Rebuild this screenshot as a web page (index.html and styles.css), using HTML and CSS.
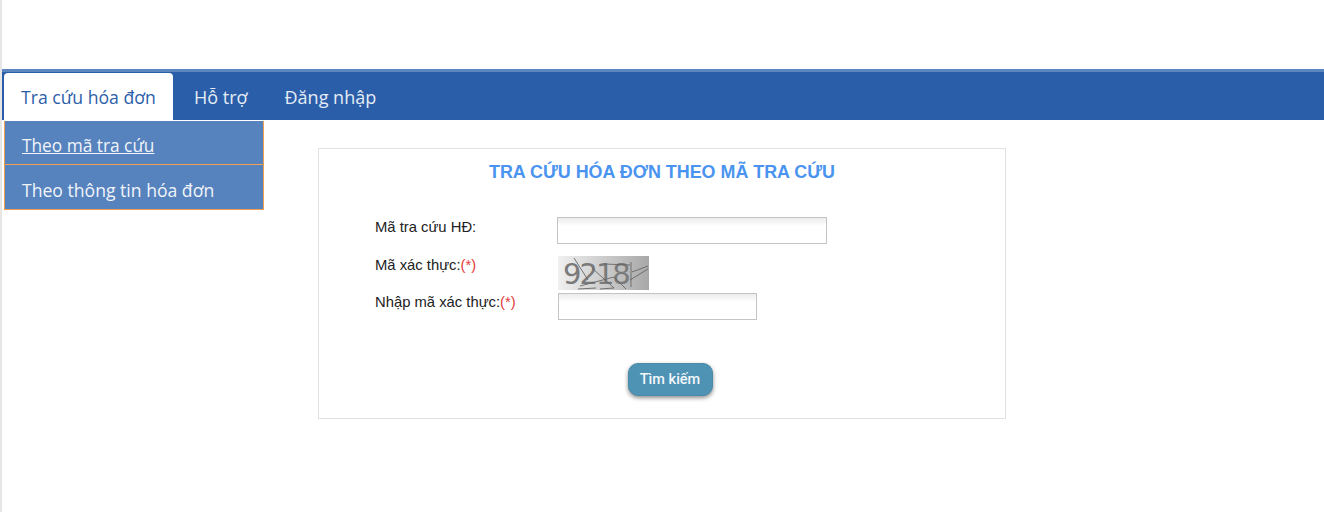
FILE: index.html
```html
<!DOCTYPE html>
<html lang="vi">
<head>
<meta charset="utf-8">
<title>Tra cứu hóa đơn</title>
<link rel="stylesheet" href="styles.css">
</head>
<body>
<div class="page">
  <nav class="nav">
    <a class="tab active">Tra cứu hóa đơn</a>
    <a class="tab tab-help">Hỗ trợ</a>
    <a class="tab tab-login">Đăng nhập</a>
    <div class="dropdown">
      <a class="drop-item current">Theo mã tra cứu</a>
      <a class="drop-item">Theo thông tin hóa đơn</a>
    </div>
  </nav>
  <main class="content">
    <section class="card">
      <h1 class="title">TRA CỨU HÓA ĐƠN THEO MÃ TRA CỨU</h1>
      <div class="row row-code">
        <label class="label">Mã tra cứu HĐ:</label>
        <input class="input input-long" type="text">
      </div>
      <div class="row row-captcha">
        <label class="label">Mã xác thực:<span class="req">(*)</span></label>
        <div class="captcha">
          <span class="captcha-text">9218</span>
          <svg class="captcha-noise" width="91" height="34" viewBox="0 0 91 34">
            <g fill="none" stroke="#666" stroke-width="0.9">
              <path d="M16 2 L30 24"/>
              <path d="M46 8 L72 9"/>
              <path d="M22 30 L56 21 L68 33"/>
              <path d="M72 24 L90 13"/>
              <path d="M74 16 L90 10"/>
              <path d="M73 6 L73 31"/>
              <path d="M20 33 L38 32"/>
              <path d="M42 33 L56 32"/>
              <path d="M34 12 L56 32"/>
            </g>
          </svg>
        </div>
      </div>
      <div class="row row-enter">
        <label class="label">Nhập mã xác thực:<span class="req">(*)</span></label>
        <input class="input input-short" type="text">
      </div>
      <div class="actions">
        <button class="btn" type="button">Tìm kiếm</button>
      </div>
    </section>
  </main>
</div>
</body>
</html>
```

FILE: styles.css
```css
* { box-sizing: border-box; }
html, body { margin: 0; padding: 0; background: #fff; height: 100%; overflow: hidden; }
body { font-family: "Liberation Sans", Arial, sans-serif; color: #222; }
.page {
  height: 512px;
  padding-top: 69px;
  border-left: 2px solid #e6e6e6;
}
.nav {
  position: relative;
  display: flex;
  height: 51px;
  padding-left: 2px;
  background: #2b5ea8;
  border-top: 3px solid #5b86c0;
  font-family: "Open Sans", sans-serif;
  font-size: 18px;
}
.tab {
  display: flex;
  align-items: center;
  height: 47px;
  margin-top: 1px;
  color: #e4ecf7;
  white-space: nowrap;
}
.tab.active {
  width: 169px;
  background: #fff;
  color: #2b5ea8;
  border-radius: 4px 4px 0 0;
  padding-left: 17px;
  font-size: 17.6px;
}
.tab-help { margin-left: 21px; }
.tab-login { margin-left: 37px; }
.dropdown {
  position: absolute;
  top: 49px;
  left: 2px;
  width: 260px;
  border: 1px solid #f0a050;
  border-top: 0;
  background: #5682bd;
  z-index: 2;
}
.drop-item {
  display: flex;
  align-items: center;
  height: 43px;
  padding: 6px 0 0 17px;
  color: #f1f5fb;
  font-size: 17.3px;
}
.drop-item + .drop-item {
  height: 45px;
  padding-top: 5px;
  border-top: 1px solid #f0a050;
  font-size: 17.6px;
}
.drop-item.current { text-decoration: underline; }
.content { padding: 28px 0 0 316px; }
.card {
  width: 688px;
  height: 271px;
  border: 1px solid #e2e2e2;
  position: relative;
}
.title {
  margin: 0;
  padding-top: 13px;
  text-align: center;
  font-size: 17.9px;
  line-height: 21px;
  font-weight: bold;
  color: #4a94f0;
}
.row { display: flex; align-items: flex-start; padding-left: 56px; }
.label { width: 182px; font-size: 14.8px; line-height: 16px; color: #222; }
.req { color: #e23b3b; }
.input {
  height: 27px;
  padding: 0 6px;
  border: 1px solid #c4c4c4;
  background: linear-gradient(#ececec, #fff 8px);
  font: 14px "Liberation Sans", sans-serif;
}
.input-long { width: 270px; }
.input-short { width: 199px; margin-left: 1px; }
.row-code { margin-top: 34px; }
.row-code .label { padding-top: 2px; }
.row-captcha { margin-top: 12px; }
.row-captcha .label { padding-top: 1px; }
.row-enter { margin-top: 3px; }
.row-enter .label { padding-top: 1px; }
.captcha {
  position: relative;
  width: 91px;
  height: 34px;
  margin-left: 1px;
  padding: 3px 0 0 5px;
  background: linear-gradient(90deg, #f0f0f0, #a8a8a8);
}
.captcha-text {
  display: block;
  font: 29px/31px "DejaVu Sans", sans-serif;
  color: #7a7a7a;
  letter-spacing: -2px;
}
.captcha-noise { position: absolute; top: 0; left: 0; }
.actions { display: flex; justify-content: center; margin-top: 43px; }
.btn {
  width: 85px;
  height: 33px;
  padding: 0;
  border: 1px solid #4a8ba8;
  border-radius: 10px;
  background: #4f93b4;
  color: #f2f7fa;
  font: 500 14.5px Roboto, sans-serif;
  box-shadow: 0 2px 4px rgba(0,0,0,.45);
  margin-left: 16px;
}
```
